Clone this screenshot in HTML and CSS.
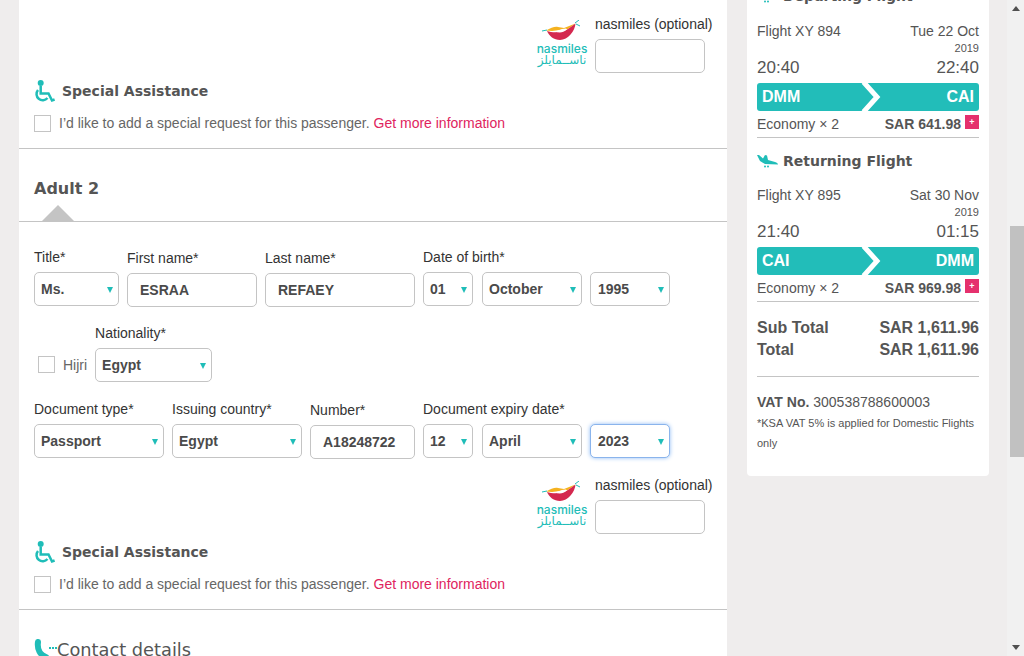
FILE: index.html
```html
<!DOCTYPE html>
<html lang="en">

<head>
    <meta charset="UTF-8">
    <meta name="viewport" content="width=device-width, initial-scale=1.0">
    <title>Passenger details</title>
    <link rel="stylesheet" href="styles.css">
</head>

<body>
    <svg class="defs" width="0" height="0">
        <symbol id="wheelchair" viewBox="0 0 21 23">
            <circle cx="6.700" cy="3" r="3" fill="currentColor" />
            <path d="M6.700 6v7.500h7.800l3.500 7 2.600-1" fill="none" stroke="currentColor" stroke-width="2.500" />
            <path d="M4 10a6.200 6.200 0 1 0 9.500 8" fill="none" stroke="currentColor" stroke-width="2.500" />
        </symbol>
        <symbol id="plane" viewBox="0 0 21 14">
            <path d="M0 1h2l4 3.500L8 1l2 .5L11 6l7 2c2 .8 3 1.500 3 2.500L8 10 3 7z" fill="currentColor" />
            <circle cx="8" cy="12.500" r="1" fill="currentColor" />
            <circle cx="11" cy="12.500" r="1" fill="currentColor" />
        </symbol>
        <symbol id="lips" viewBox="0 0 40 22">
            <path d="M4 10.500C9 8 13 6 16 7l6 1 11.500-4.500L26 9l-8 1-8 1z" fill="#f5b21f" />
            <path d="M5 11c6 2 14 2 21-2l7.500-5.500C33 11 26 20 18 20 12 20 7 16 5 11z" fill="#d4284f" />
            <path d="M13 11.500L20 9l4-.5 1 1c-4 3.500-8 3.500-12 2z" fill="#fff" />
            <path d="M0 11l5-1M33 3l4-3M34 4l4 2" stroke="#1fbdb8" stroke-width="1" fill="none" />
        </symbol>
    </svg>

    <div class="page">
        <main class="main">
            <section class="pax pax-first">
                <div class="miles">
                    <div class="miles-logo">
                        <svg class="lips"><use href="#lips" /></svg>
                        <span class="miles-en">nasmiles</span>
                        <span class="miles-ar" lang="ar">ناســمايلز</span>
                    </div>
                    <div class="miles-field">
                        <label>nasmiles (optional)</label>
                        <input class="input input-miles" type="text">
                    </div>
                </div>
                <h3 class="assist"><svg class="assist-icon"><use href="#wheelchair" /></svg>Special Assistance</h3>
                <div class="request">
                    <span class="check"></span>
                    <span>I’d like to add a special request for this passenger.</span>
                    <a class="more">Get more information</a>
                </div>
            </section>

            <section class="adult">
                <h2 class="adult-title">Adult 2</h2>
                <div class="adult-line"><span class="tip"></span></div>

                <div class="row row-name">
                    <div class="field w85"><label>Title*</label><div class="select">Ms.</div></div>
                    <div class="field w130 low"><label>First name*</label><div class="input text">ESRAA</div></div>
                    <div class="field w150 low"><label>Last name*</label><div class="input text">REFAEY</div></div>
                    <div class="dob">
                        <label>Date of birth*</label>
                        <div class="dob-row">
                            <div class="select w50">01</div>
                            <div class="select w100">October</div>
                            <div class="select w80">1995</div>
                        </div>
                    </div>
                </div>

                <div class="row row-nat">
                    <div class="hijri"><span class="check"></span><span>Hijri</span></div>
                    <div class="field w117"><label>Nationality*</label><div class="select">Egypt</div></div>
                </div>

                <div class="row row-doc">
                    <div class="field w130"><label>Document type*</label><div class="select">Passport</div></div>
                    <div class="field w130"><label>Issuing country*</label><div class="select">Egypt</div></div>
                    <div class="field w105 low"><label>Number*</label><div class="input text">A18248722</div></div>
                    <div class="dob">
                        <label>Document expiry date*</label>
                        <div class="dob-row">
                            <div class="select w50">12</div>
                            <div class="select w100">April</div>
                            <div class="select w80 focus">2023</div>
                        </div>
                    </div>
                </div>

                <div class="miles miles-second">
                    <div class="miles-logo">
                        <svg class="lips"><use href="#lips" /></svg>
                        <span class="miles-en">nasmiles</span>
                        <span class="miles-ar" lang="ar">ناســمايلز</span>
                    </div>
                    <div class="miles-field">
                        <label>nasmiles (optional)</label>
                        <input class="input input-miles" type="text">
                    </div>
                </div>
                <h3 class="assist"><svg class="assist-icon"><use href="#wheelchair" /></svg>Special Assistance</h3>
                <div class="request">
                    <span class="check"></span>
                    <span>I’d like to add a special request for this passenger.</span>
                    <a class="more">Get more information</a>
                </div>
            </section>

            <section class="contact">
                <svg class="phone" viewBox="0 0 23 22">
                    <path d="M4 3C3 10 6 16 12 18" fill="none" stroke="currentColor" stroke-width="6" stroke-linecap="round" />
                    <path d="M15 9h2M18 9h2M21 9h2" stroke="currentColor" stroke-width="2" />
                </svg>
                <h2 class="contact-title">Contact details</h2>
            </section>
        </main>

        <aside class="side">
            <h3 class="flight-title flight-title-cut"><svg class="plane"><use href="#plane" /></svg>Departing Flight</h3>
            <div class="leg leg-first">
                <div class="between"><span>Flight XY 894</span><span>Tue 22 Oct</span></div>
                <div class="year">2019</div>
                <div class="between times"><span>20:40</span><span>22:40</span></div>
                <div class="route">
                    <span>DMM</span>
                    <svg class="chevron" viewBox="0 0 22 28"><path d="M3.500-1L17 14 3.500 29" /></svg>
                    <span class="route-to">CAI</span>
                </div>
                <div class="between fare"><span>Economy × 2</span><span class="price"><b>SAR 641.98</b><i class="plus">+</i></span></div>
            </div>
            <h3 class="flight-title"><svg class="plane"><use href="#plane" /></svg>Returning Flight</h3>
            <div class="leg leg-last">
                <div class="between"><span>Flight XY 895</span><span>Sat 30 Nov</span></div>
                <div class="year">2019</div>
                <div class="between times"><span>21:40</span><span>01:15</span></div>
                <div class="route">
                    <span>CAI</span>
                    <svg class="chevron" viewBox="0 0 22 28"><path d="M3.500-1L17 14 3.500 29" /></svg>
                    <span class="route-to">DMM</span>
                </div>
                <div class="between fare"><span>Economy × 2</span><span class="price"><b>SAR 969.98</b><i class="plus">+</i></span></div>
            </div>
            <div class="totals">
                <div class="between"><span>Sub Total</span><span>SAR 1,611.96</span></div>
                <div class="between"><span>Total</span><span>SAR 1,611.96</span></div>
            </div>
            <div class="vat">
                <p class="vat-no"><b>VAT No.</b> 300538788600003</p>
                <p class="vat-note">*KSA VAT 5% is applied for Domestic Flights only</p>
            </div>
        </aside>

        <div class="scrollbar">
            <span class="arrow arrow-up"></span>
            <span class="thumb"></span>
            <span class="arrow arrow-down"></span>
        </div>
    </div>
</body>

</html>
```

FILE: styles.css
```css
* {
    box-sizing: border-box;
    margin: 0;
    padding: 0;
}

html,
body {
    height: 100%;
    overflow: hidden;
}

body {
    background-color: #efeded;
    font-family: "Liberation Sans", Arial, sans-serif;
    font-size: 14px;
    color: #4a4a4a;
}

.defs {
    display: block;
    height: 0;
}

.page {
    display: flex;
    height: 656px;
    padding-left: 19px;
}

/* left column */
.main {
    width: 708px;
    height: 656px;
    background-color: #fff;
    overflow: hidden;
    flex: none;
}

.pax-first {
    height: 149px;
    padding: 16px 22px 0 15px;
    border-bottom: 1px solid #c4c4c4;
}

.miles {
    display: flex;
    justify-content: flex-end;
    gap: 7px;
    height: 57px;
}

.miles-logo {
    display: flex;
    flex-direction: column;
    align-items: center;
    width: 52px;
    padding-top: 4px;
    color: #1fbdb8;
    white-space: nowrap;
}

.lips {
    width: 40px;
    height: 22px;
    flex: none;
}

.miles-en {
    font-family: "Inter", sans-serif;
    font-size: 12px;
    font-weight: 500;
    line-height: 11px;
    margin-top: 1px;
}

.miles-ar {
    font-family: "DejaVu Sans", sans-serif;
    font-size: 12px;
    line-height: 11px;
    margin-top: 1px;
}

.miles-field {
    width: 110px;
    color: #333;
    white-space: nowrap;
}

.miles-field label {
    display: block;
    line-height: 16px;
    margin-bottom: 7px;
}

.input {
    display: block;
    height: 34px;
    width: 100%;
    background-color: #fff;
    border: 1px solid #c4c4c4;
    border-radius: 5px;
    outline: none;
}

.assist {
    display: flex;
    align-items: center;
    gap: 7px;
    height: 24px;
    margin-top: 6px;
    font-family: "DejaVu Sans", sans-serif;
    font-size: 14px;
    font-weight: bold;
    color: #555;
}

.assist-icon {
    width: 21px;
    height: 23px;
    color: #1fbdb8;
    flex: none;
}

.request {
    display: flex;
    align-items: center;
    gap: 4px;
    height: 18px;
    margin-top: 11px;
    color: #666;
}

.request .check {
    margin-right: 4px;
}

.check {
    display: block;
    width: 17px;
    height: 17px;
    border: 1px solid #c4c4c4;
    flex: none;
}

.more {
    color: #e0245e;
}

/* adult 2 */
.adult {
    height: 461px;
    border-bottom: 1px solid #c4c4c4;
}

.adult-title {
    font-family: "DejaVu Sans", sans-serif;
    font-size: 16px;
    font-weight: bold;
    line-height: 20px;
    color: #555;
    padding: 30px 0 0 15px;
    box-sizing: content-box;
    height: 26px;
}

.adult-line {
    height: 17px;
    border-bottom: 1px solid #c4c4c4;
    padding-left: 23px;
}

.tip {
    display: block;
    width: 32px;
    height: 16px;
    background-color: #c4c4c4;
    clip-path: polygon(50% 0, 100% 100%, 0 100%);
}

.row {
    display: flex;
    padding-left: 15px;
    gap: 8px;
}

.row-name {
    margin-top: 27px;
}

.row-nat {
    margin-top: 18px;
    padding-left: 19px;
}

.row-doc {
    margin-top: 19px;
}

.field label,
.dob label {
    display: block;
    line-height: 16px;
    margin-bottom: 7px;
    color: #333;
    white-space: nowrap;
}

.low {
    padding-top: 1px;
}

.w85 { width: 85px; }
.w130 { width: 130px; }
.w150 { width: 150px; }
.w117 { width: 117px; }
.w105 { width: 105px; }
.w50 { width: 50px; }
.w100 { width: 100px; }
.w80 { width: 80px; }

.dob-row {
    display: flex;
    gap: 9px;
}

.dob-row .w100 {
    margin-right: -1px;
}

.select,
.text {
    display: flex;
    align-items: center;
    height: 34px;
    font-weight: bold;
    color: #4a4a4a;
}

.select {
    position: relative;
    padding-left: 6px;
    background-color: #fff;
    border: 1px solid #c4c4c4;
    border-radius: 5px;
}

.select::after {
    content: "";
    position: absolute;
    right: 5px;
    top: 14px;
    border-top: 6px solid #1fbdb8;
    border-left: 3.500px solid transparent;
    border-right: 3.500px solid transparent;
}

.select.w80 {
    padding-left: 7px;
}

.text {
    padding-left: 12px;
}

.focus {
    border-color: #8ab4ec;
    box-shadow: 0 0 4px #8fbcf5;
}

.hijri {
    display: flex;
    align-items: center;
    gap: 8px;
    height: 17px;
    margin-top: 31px;
    color: #666;
}

.miles-second {
    margin-top: 18px;
    padding-right: 22px;
}

.adult .assist {
    margin-left: 15px;
}

.adult .request {
    margin-left: 15px;
}

.contact {
    display: flex;
    align-items: center;
    padding: 28px 0 0 15px;
}

.phone {
    width: 23px;
    height: 22px;
    color: #1fbdb8;
    flex: none;
}

.contact-title {
    font-family: "DejaVu Sans", sans-serif;
    font-size: 17.800px;
    font-weight: normal;
    line-height: 24px;
    color: #555;
}

/* right column */
.side {
    width: 242px;
    height: 476px;
    margin-left: 20px;
    padding: 0 10px;
    background-color: #fff;
    border-radius: 0 0 4px 4px;
    overflow: hidden;
    flex: none;
}

.flight-title {
    display: flex;
    align-items: center;
    gap: 5px;
    height: 18px;
    font-family: "DejaVu Sans", sans-serif;
    font-size: 14px;
    font-weight: bold;
    color: #555;
}

.flight-title-cut {
    margin-top: -13px;
}

.plane {
    width: 21px;
    height: 14px;
    color: #1fbdb8;
    flex: none;
}

.leg {
    margin-top: 16px;
}

.leg-first {
    margin-top: 17px;
    margin-bottom: 14px;
}

.between {
    display: flex;
    justify-content: space-between;
    line-height: 18px;
    color: #555;
}

.year {
    text-align: right;
    font-size: 11px;
    line-height: 16px;
    color: #555;
}

.times {
    font-size: 17px;
    line-height: 20px;
    margin-top: 2px;
}

.route {
    display: grid;
    grid-template-columns: 98px 22px 1fr;
    align-items: center;
    height: 28px;
    margin-top: 5px;
    padding-left: 5px;
    background-color: #22bdb9;
    border-radius: 3px;
    color: #fff;
    font-size: 16px;
    font-weight: bold;
}

.route-to {
    text-align: right;
    padding-right: 5px;
}

.chevron {
    width: 22px;
    height: 28px;
}

.chevron path {
    fill: none;
    stroke: #fff;
    stroke-width: 5;
}

.fare {
    height: 27px;
    align-items: center;
    border-bottom: 1px solid #c4c4c4;
}

.price {
    display: flex;
    align-items: center;
    gap: 4px;
}

.plus {
    display: block;
    width: 14px;
    height: 14px;
    margin-top: -5px;
    background-color: #e5316e;
    color: #fff;
    font-style: normal;
    font-weight: bold;
    font-size: 9px;
    line-height: 14px;
    text-align: center;
}

.totals {
    padding: 15px 0;
    border-bottom: 1px solid #c4c4c4;
}

.totals .between {
    font-size: 16px;
    font-weight: bold;
    line-height: 22px;
}

.vat {
    padding-top: 16px;
    color: #555;
}

.vat-no {
    line-height: 18px;
}

.vat-note {
    margin-top: 2px;
    font-size: 11px;
    line-height: 20px;
}

/* scrollbar */
.scrollbar {
    display: flex;
    flex-direction: column;
    align-items: flex-end;
    justify-content: space-between;
    width: 17px;
    height: 656px;
    margin-left: 18px;
    background-color: #f1f1f1;
    flex: none;
    position: relative;
}

.thumb {
    position: absolute;
    top: 226px;
    right: 0;
    width: 14px;
    height: 231px;
    background-color: #c1c1c1;
}

.arrow {
    display: block;
    margin: 6px 4px;
    border-left: 4px solid transparent;
    border-right: 4px solid transparent;
}

.arrow-up {
    border-bottom: 5px solid #505050;
}

.arrow-down {
    border-top: 5px solid #505050;
}
```
